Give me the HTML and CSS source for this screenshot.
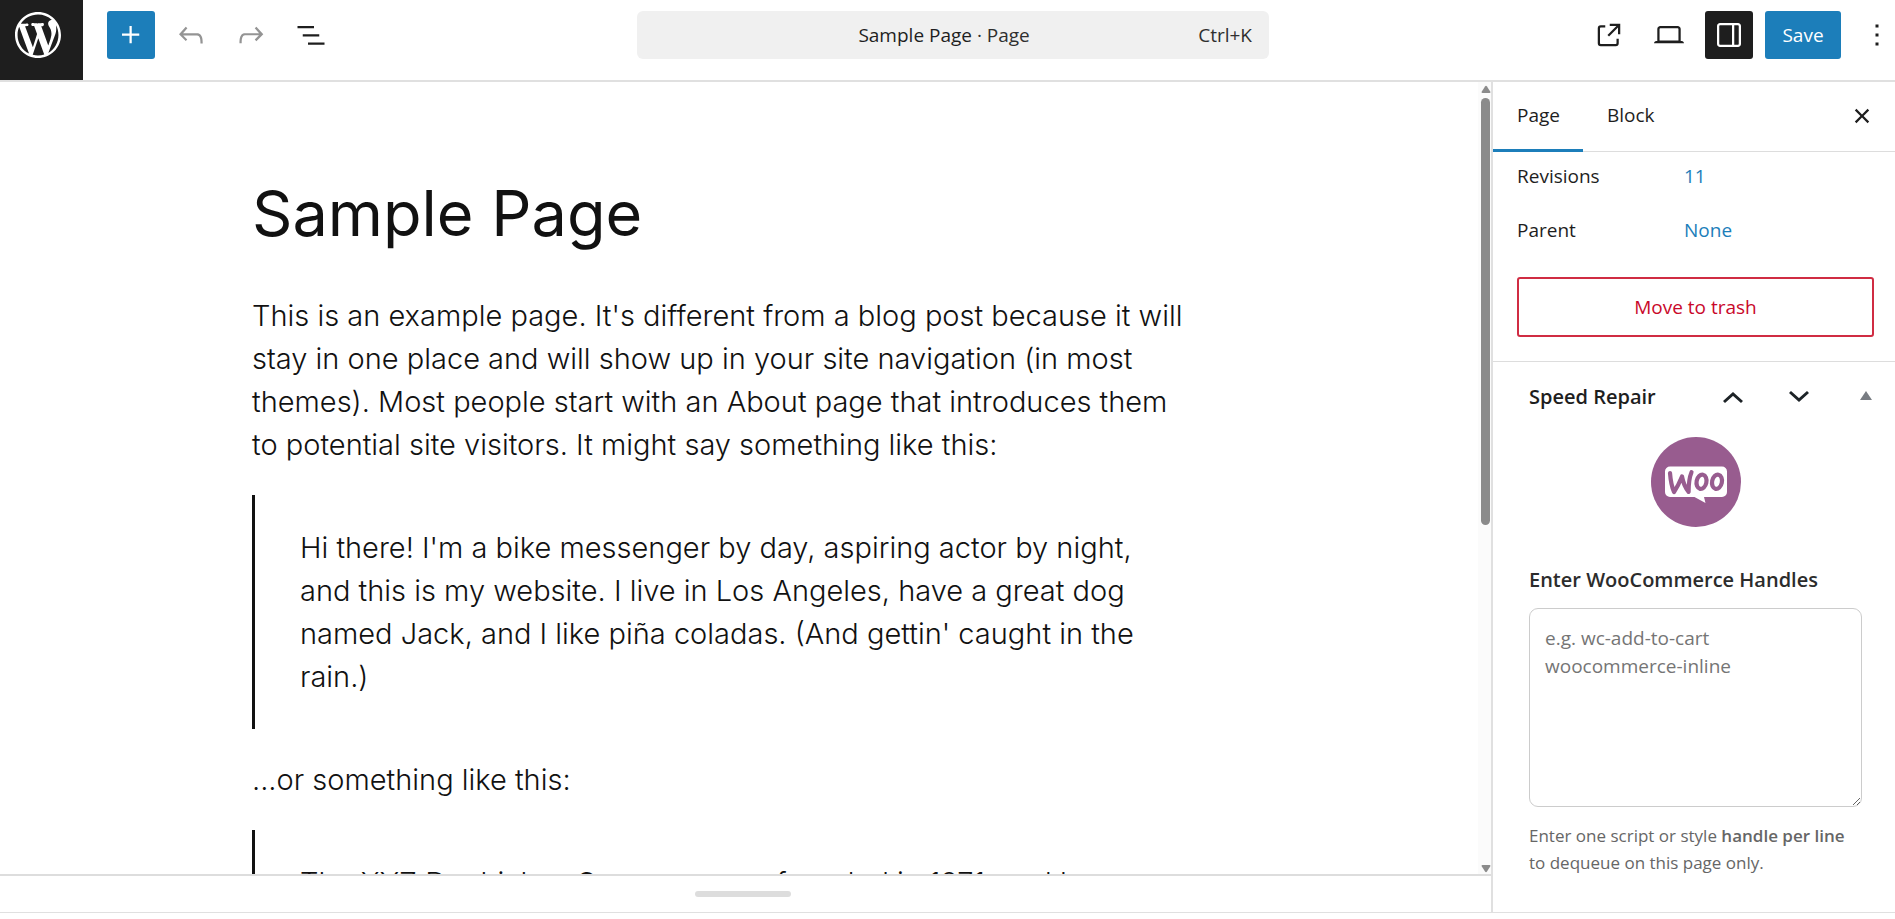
FILE: index.html
```html
<!DOCTYPE html>
<html lang="en">
<head>
<meta charset="utf-8">
<title>Sample Page · Page</title>
<link rel="stylesheet" href="styles.css">
</head>
<body>
<div class="app">
  <header class="topbar">
    <a class="site-hub" href="#" aria-label="View pages">
      <svg class="site-logo" viewBox="0 0 20 20" aria-hidden="true"><path d="M20 10c0-5.51-4.49-10-10-10C4.48 0 0 4.49 0 10c0 5.52 4.48 10 10 10 5.51 0 10-4.48 10-10zM7.78 15.37L4.37 6.22c.55-.02 1.17-.08 1.17-.08.5-.06.44-1.13-.06-1.11 0 0-1.45.11-2.37.11-.18 0-.37 0-.58-.01C4.12 2.69 6.87 1.11 10 1.11c2.33 0 4.45.87 6.05 2.34-.68-.11-1.65.39-1.65 1.58 0 .74.45 1.36.9 2.1.35.61.55 1.36.55 2.46 0 1.49-1.4 5-1.4 5l-3.03-8.37c.54-.02.82-.17.82-.17.5-.05.44-1.25-.06-1.22 0 0-1.44.12-2.38.12-.87 0-2.33-.12-2.33-.12-.5-.03-.56 1.2-.06 1.22l.92.08 1.26 3.41zM17.41 10c.24-.64.74-1.87.43-4.25.7 1.29 1.05 2.71 1.05 4.25 0 3.29-1.73 6.24-4.4 7.78.97-2.59 1.94-5.2 2.92-7.78zM6.1 18.09C3.12 16.65 1.11 13.53 1.11 10c0-1.3.23-2.48.72-3.59C3.25 10.3 4.67 14.2 6.1 18.09zm4.03-6.63l2.58 6.98c-.86.29-1.76.45-2.71.45-.79 0-1.57-.11-2.29-.33.81-2.38 1.62-4.74 2.42-7.1z"/></svg>
    </a>
    <div class="tools tools-left">
      <button class="icon-button is-primary" type="button" aria-label="Block Inserter"><svg viewBox="0 0 24 24"><path d="M11 12.5V17.5H12.5V12.5H17.5V11H12.5V6H11V11H6V12.5H11Z"/></svg></button>
      <button class="icon-button is-muted" type="button" aria-label="Undo"><svg viewBox="0 0 24 24"><path d="M18.3 11.7c-.6-.6-1.4-.9-2.3-.9H6.7l2.9-3.3-1.1-1-4.5 5L8.5 16l1-1-2.7-2.7H16c.5 0 .9.2 1.3.5 1 1 1 3.4 1 4.5v.3h1.5v-.2c0-1.5 0-4.3-1.5-5.7z"/></svg></button>
      <button class="icon-button is-muted" type="button" aria-label="Redo"><svg viewBox="0 0 24 24"><path d="M15.6 6.5l-1.1 1 2.9 3.3H8c-.9 0-1.7.3-2.3.9-1.4 1.5-1.4 4.2-1.4 5.6v.2h1.5v-.3c0-1.1 0-3.5 1-4.5.3-.3.7-.5 1.3-.5h9.2L14.5 15l1.1 1.1 4.6-4.6-4.6-5z"/></svg></button>
      <button class="icon-button" type="button" aria-label="Document Overview"><svg viewBox="0 0 24 24"><path d="M3 6h11v1.5H3V6Zm3.5 5.5h11V13h-11v-1.5ZM21 17H10v1.5h11V17Z"/></svg></button>
    </div>
    <div class="command">
      <button class="command-bar" type="button">
        <span class="command-title">Sample Page <span class="command-type">· Page</span></span>
        <span class="command-key">Ctrl+K</span>
      </button>
    </div>
    <div class="tools tools-right">
      <a class="icon-button" href="#" aria-label="View Page"><svg viewBox="0 0 24 24"><path d="M19.5 4.5h-7V6h4.44l-5.97 5.97 1.06 1.06L18 7.06v4.44h1.5v-7Zm-13 1a2 2 0 0 0-2 2v10a2 2 0 0 0 2 2h10a2 2 0 0 0 2-2v-3H17v3a.5.5 0 0 1-.5.5h-10a.5.5 0 0 1-.5-.5v-10a.5.5 0 0 1 .5-.5h3V5.5h-3Z"/></svg></a>
      <button class="icon-button" type="button" aria-label="View"><svg viewBox="0 0 24 24"><path d="M20.5 16h-.7V8c0-1.1-.9-2-2-2H6.2c-1.1 0-2 .9-2 2v8h-.7c-.8 0-1.5.7-1.5 1.5h20c0-.8-.7-1.5-1.5-1.5zM5.7 8c0-.3.2-.5.5-.5h11.6c.3 0 .5.2.5.5v7.6H5.7V8z"/></svg></button>
      <button class="icon-button is-pressed" type="button" aria-label="Settings" aria-pressed="true"><svg viewBox="0 0 24 24"><path d="M18 4H6c-1.1 0-2 .9-2 2v12c0 1.1.9 2 2 2h12c1.1 0 2-.9 2-2V6c0-1.1-.9-2-2-2zm-4 14.5H6c-.3 0-.5-.2-.5-.5V6c0-.3.2-.5.5-.5h8v13zm4.5-.5c0 .3-.2.5-.5.5h-2.5v-13H18c.3 0 .5.2.5.5v12z"/></svg></button>
      <button class="save" type="button">Save</button>
      <button class="icon-button" type="button" aria-label="Options"><svg viewBox="0 0 24 24"><path d="M13 19h-2v-2h2v2zm0-6h-2v-2h2v2zm0-6h-2V5h2v2z"/></svg></button>
    </div>
  </header>

  <div class="workspace">
    <div class="editor">
      <div class="canvas">
        <main class="document">
          <h1 class="title">Sample Page</h1>
          <p class="text">This is an example page. It's different from a blog post because it will stay in one place and will show up in your site navigation (in most themes). Most people start with an About page that introduces them to potential site visitors. It might say something like this:</p>
          <blockquote class="quote">
            <p class="text">Hi there! I'm a bike messenger by day, aspiring actor by night, and this is my website. I live in Los Angeles, have a great dog named Jack, and I like piña coladas. (And gettin' caught in the rain.)</p>
          </blockquote>
          <p class="text">...or something like this:</p>
          <blockquote class="quote">
            <p class="text">The XYZ Doohickey Company was founded in 1971, and has been providing quality doohickeys to the public ever since.</p>
          </blockquote>
        </main>
        <div class="scrollbar" aria-hidden="true">
          <svg class="scroll-arrow" viewBox="0 0 10 8"><path d="M4 1.500Q5 0 6 1.500L9.500 7Q9.500 8 8.500 8H1.500Q.5 8 .5 7Z"/></svg>
          <div class="scroll-track"><div class="scroll-thumb"></div></div>
          <svg class="scroll-arrow" viewBox="0 0 10 8"><path d="M4 6.500Q5 8 6 6.500L9.500 1Q9.500 0 8.500 0H1.500Q.5 0 .5 1Z"/></svg>
        </div>
      </div>
      <div class="meta-resize"><button class="resize-handle" type="button" aria-label="Drag to resize"></button></div>
    </div>

    <aside class="sidebar">
      <div class="tabs">
        <button class="tab is-active" type="button">Page</button>
        <button class="tab" type="button">Block</button>
        <button class="icon-button close" type="button" aria-label="Close Settings"><svg viewBox="0 0 24 24"><path d="M12 13.06l3.712 3.713 1.061-1.06L13.061 12l3.712-3.712-1.06-1.06L12 10.938 8.288 7.227l-1.061 1.06L10.939 12l-3.712 3.712 1.06 1.061L12 13.061z"/></svg></button>
      </div>
      <section class="summary">
        <div class="row"><span class="row-label">Revisions</span><a class="row-value" href="#">11</a></div>
        <div class="row"><span class="row-label">Parent</span><a class="row-value" href="#">None</a></div>
        <button class="trash" type="button">Move to trash</button>
      </section>
      <section class="metabox">
        <div class="metabox-head">
          <h2 class="metabox-title">Speed Repair</h2>
          <button class="order" type="button" aria-label="Move up"><svg viewBox="0 0 22 14"><path d="M2 12 11 4l9 8"/></svg></button>
          <button class="order" type="button" aria-label="Move down"><svg viewBox="0 0 22 14"><path d="M2 2l9 8 9-8"/></svg></button>
          <button class="toggle" type="button" aria-label="Toggle panel"><svg viewBox="0 0 12 14"><path d="M6 1l6 9H0Z"/></svg></button>
        </div>
        <svg class="woo" viewBox="0 0 90 90" role="img" aria-label="WooCommerce">
          <circle cx="45" cy="45" r="45" fill="#985c8f"/>
          <path fill="#fff" d="M19 29.500H71a5 5 0 0 1 5 5V55a5 5 0 0 1-5 5H53l1.500 6L43.500 60H19a5 5 0 0 1-5-5V34.500a5 5 0 0 1 5-5Z"/>
          <g fill="none" stroke="#985c8f" stroke-width="4.200" stroke-linecap="round" stroke-linejoin="round">
            <path d="M19 36c.6 7.500 1.800 14 4 19 3-4.500 5.600-9.500 8-15.500 1.200 6.500 3.500 11.500 6.600 15.300 0-8.300.7-14.300 2.900-19.600"/>
            <ellipse cx="50.500" cy="44.800" rx="4.900" ry="7.200" transform="rotate(12 50.500 44.800)"/>
            <ellipse cx="66" cy="44.800" rx="4.900" ry="7.200" transform="rotate(12 66 44.800)"/>
          </g>
        </svg>
        <label class="field-label" for="handles">Enter WooCommerce Handles</label>
        <textarea class="handles" id="handles" placeholder="e.g. wc-add-to-cart&#10;woocommerce-inline"></textarea>
        <p class="help">Enter one script or style <strong>handle per line</strong> to dequeue on this page only.</p>
      </section>
    </aside>
  </div>
  <footer class="bottombar"></footer>
</div>
</body>
</html>
```

FILE: styles.css
```css
* { box-sizing: border-box; }

body {
  margin: 0;
  color: #1e1e1e;
  background: #fff;
  font-family: "Open Sans", "Noto Sans", sans-serif;
  font-size: 19px;
  line-height: 27px;
}

button, textarea { font: inherit; color: inherit; }
button { margin: 0; padding: 0; border: 0; background: none; cursor: pointer; }
a { color: inherit; text-decoration: none; }
h1, h2, p, blockquote { margin: 0; }
svg { display: block; fill: currentColor; }

.app { display: flex; flex-direction: column; height: 100vh; overflow: hidden; }

/* Top bar */
.topbar { display: flex; flex: none; border-bottom: 2px solid #e0e0e0; }
.site-hub {
  flex: none;
  display: flex;
  justify-content: center;
  padding: 12px 7px 22px 0;
  width: 83px;
  color: #fff;
  background: #1e1e1e;
}
.site-logo { width: 46px; height: 46px; }
.tools { display: flex; flex: none; align-items: flex-start; gap: 12px; padding-top: 11px; }
.tools-left { margin-left: 24px; }
.tools-right { margin-right: -6px; }
.icon-button {
  display: flex;
  flex: none;
  align-items: center;
  justify-content: center;
  width: 48px;
  height: 48px;
  border-radius: 3px;
}
.icon-button svg { width: 36px; height: 36px; }
.is-primary { color: #fff; background: #1c7eba; }
.is-muted { color: #949494; }
.is-pressed { color: #fff; background: #1e1e1e; }
.save { width: 76px; height: 48px; border-radius: 3px; color: #fff; background: #1c7eba; }
.command { display: flex; flex: 1; justify-content: center; padding: 11px 14px 0 0; }
.command-bar {
  display: flex;
  align-items: center;
  width: 632px;
  height: 48px;
  padding: 0 17px;
  border-radius: 6px;
  background: #f0f0f0;
}
.command-title { flex: 1; padding-left: 36px; text-align: center; }
.command-type, .command-key { color: #2f2f2f; }

/* Editor canvas */
.workspace { display: flex; flex: 1; min-height: 0; }
.editor { display: flex; flex: 1; flex-direction: column; min-width: 0; }
.canvas { display: flex; flex: 1; min-height: 0; overflow: hidden; }
.document {
  flex: 1;
  max-width: 974px;
  margin: 0 auto;
  padding: 94px 30px 0 0;
  color: #111;
  font-family: Inter, "Open Sans", sans-serif;
  font-weight: 300;
}
.title { margin-bottom: 43px; font-size: 63px; line-height: 75px; font-weight: 400; }
.text { font-size: 29px; line-height: 43px; }
.document > .text + .quote, .quote + .text { margin-top: 29px; }
.quote { padding: 31px 45px; border-left: 3px solid #111; }
.scrollbar {
  display: flex;
  flex: none;
  flex-direction: column;
  align-items: center;
  gap: 5px;
  width: 13px;
  padding: 3px 0 1px 2px;
  color: #8b8b8b;
  background: #fbfbfb;
}
.scroll-arrow { width: 10px; height: 8px; }
.scroll-track { flex: 1; width: 9px; }
.scroll-thumb { height: 56%; border-radius: 5px; background: #8b8b8b; }
.meta-resize {
  display: flex;
  flex: none;
  align-items: center;
  justify-content: center;
  height: 38px;
  padding-right: 5px;
  border-top: 2px solid #ddd;
}
.resize-handle { width: 96px; height: 6px; border-radius: 3px; background: #ddd; }
.bottombar { flex: none; height: 7px; border-top: 1px solid #e0e0e0; }

/* Settings sidebar */
.sidebar { flex: none; width: 404px; border-left: 2px solid #e0e0e0; }
.tabs { display: flex; height: 70px; border-bottom: 1px solid #ddd; }
.tab { padding: 0 23px 0 24px; border-bottom: 3px solid transparent; }
.tab.is-active { margin-bottom: -1px; border-color: #1c7eba; }
.close { margin: 10px 9px 0 auto; }
.summary { padding: 0 21px 24px 24px; border-bottom: 1px solid #ddd; }
.row { display: flex; align-items: center; height: 60px; }
.row:first-child { height: 48px; }
.row-label { width: 167px; }
.row-value { color: #1c7eba; }
.trash {
  width: 100%;
  height: 60px;
  margin-top: 17px;
  border: 2px solid #d02c43;
  border-radius: 3px;
  color: #c9082a;
}
.metabox { display: flex; flex-direction: column; padding: 0 33px 0 36px; }
.metabox-head { display: flex; align-items: center; height: 69px; margin-right: -10px; }
.metabox-title { flex: 1; font-size: 20px; line-height: 27px; font-weight: 600; }
.order { width: 66px; }
.order svg {
  width: 22px;
  height: 14px;
  margin: 0 auto;
  fill: none;
  stroke: #1d2327;
  stroke-width: 3;
}
.toggle { margin-left: 28px; color: #787c82; }
.toggle svg { width: 12px; height: 14px; }
.woo { width: 90px; height: 90px; margin: 6px auto 0; }
.field-label { margin-top: 39px; color: #2c2c2c; font-size: 20px; font-weight: 600; }
.handles {
  width: 100%;
  height: 199px;
  margin-top: 15px;
  padding: 15px;
  border: 1px solid #ccc;
  border-radius: 9px;
  line-height: 28px;
  resize: vertical;
  outline: 0;
}
.handles::placeholder { color: #757575; }
.help { margin-top: 15px; color: #666; font-size: 17px; }
.help strong { font-weight: 600; }
```
